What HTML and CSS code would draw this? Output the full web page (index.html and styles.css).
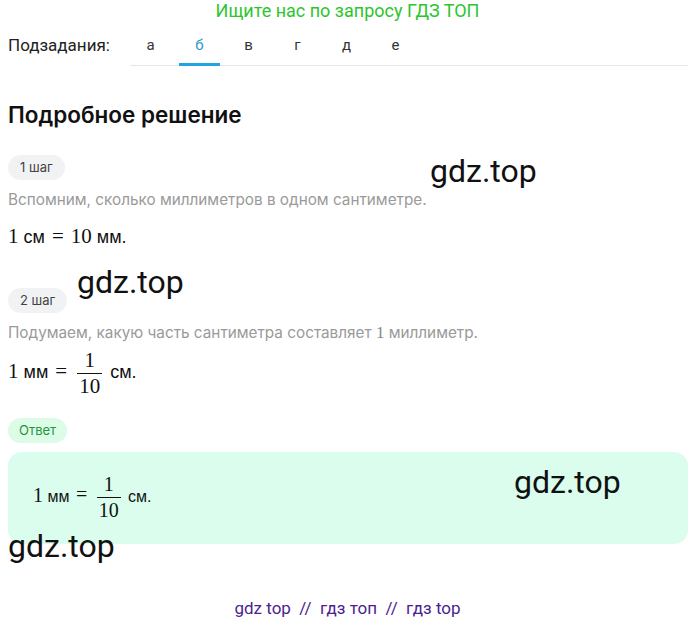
FILE: index.html
```html
<!DOCTYPE html>
<html lang="ru">
  <head>
    <meta charset="UTF-8" />
    <meta name="viewport" content="width=device-width, initial-scale=1.0" />
    <title>Подробное решение</title>
    <link rel="stylesheet" href="styles.css">
  </head>
  <body>
    <div class="banner">Ищите нас по запросу ГДЗ ТОП</div>

    <div class="subtasks">
      <span class="subtasks-label">Подзадания:</span>
      <div class="tabs">
        <span class="tab">а</span>
        <span class="tab active">б</span>
        <span class="tab">в</span>
        <span class="tab">г</span>
        <span class="tab">д</span>
        <span class="tab">е</span>
      </div>
    </div>

    <div class="solution">
      <h2 class="title">Подробное решение</h2>

      <div class="step">
        <span class="badge">1 шаг</span>
        <p class="hint">Вспомним, сколько миллиметров в одном сантиметре.</p>
        <p class="math"><span class="num">1</span> см <span class="num eq">=</span> <span class="num">10</span> мм.</p>
      </div>

      <div class="step">
        <span class="badge">2 шаг</span>
        <p class="hint">Подумаем, какую часть сантиметра составляет <span class="num">1</span> миллиметр.</p>
        <p class="math">
          <span class="num">1</span> мм <span class="num eq">=</span>
          <span class="frac"><span class="num">1</span><span class="num den">10</span></span>
          см.
        </p>
      </div>

      <span class="badge badge-answer">Ответ</span>
      <div class="answer">
        <p class="math math-small">
          <span class="num">1</span> мм <span class="num eq">=</span>
          <span class="frac"><span class="num">1</span><span class="num den">10</span></span>
          см.
        </p>
      </div>
    </div>

    <div class="footer">gdz top &nbsp;//&nbsp; гдз топ &nbsp;//&nbsp; гдз top</div>

    <!-- watermarks lie over the content -->
    <span class="mark mark-1">gdz.top</span>
    <span class="mark mark-2">gdz.top</span>
    <span class="mark mark-3">gdz.top</span>
    <span class="mark mark-4">gdz.top</span>
  </body>
</html>
```

FILE: styles.css
```css
* {
  box-sizing: border-box;
}

body {
  margin: 0;
  position: relative;
  background-color: #fff;
  font-family: Inter, 'Noto Sans', sans-serif;
  color: #111;
}

p {
  margin: 0;
}

.banner {
  height: 26px;
  padding-top: 0;
  text-align: center;
  font-family: Roboto, sans-serif;
  font-size: 18px;
  color: #2dc52d;
}

.subtasks {
  display: flex;
  align-items: stretch;
  height: 40px;
  padding: 0 7px 0 8px;
}

.subtasks-label {
  display: flex;
  align-items: center;
  width: 122px;
  padding-bottom: 2px;
  font-family: Roboto, sans-serif;
  font-size: 17px;
  color: #222;
}

.tabs {
  flex: 1;
  display: flex;
  gap: 8px;
  border-bottom: 1px solid #e6e6e6;
}

.tab {
  width: 41px;
  display: flex;
  align-items: center;
  justify-content: center;
  padding-bottom: 1px;
  font-family: Roboto, sans-serif;
  font-size: 15px;
  color: #333;
}

.tab.active {
  color: #2d96cf;
  border-bottom: 3px solid #1fa5e3;
  margin-bottom: -1px;
  padding-bottom: 0;
}

.solution {
  padding: 0 7px 0 8px;
}

.title {
  margin: 34px 0 0;
  font-size: 22.5px;
  font-weight: 600;
  line-height: 30px;
  color: #111;
}

.step {
  display: flex;
  flex-direction: column;
  align-items: flex-start;
}

.badge {
  display: inline-block;
  margin-top: 25px;
  height: 25px;
  line-height: 25px;
  padding: 0 12px;
  border-radius: 13px;
  background-color: #f1f2f4;
  font-size: 13px;
  color: #444;
}

.step + .step .badge {
  margin-top: 38px;
}

.hint {
  margin-top: 9px;
  font-size: 15.3px;
  line-height: 22px;
  color: #9a9a9a;
}

.math {
  margin-top: 12px;
  font-family: 'Liberation Sans', Arial, sans-serif;
  font-size: 18px;
  line-height: 26px;
  color: #111;
}

.num {
  font-family: 'Liberation Serif', 'Times New Roman', serif;
  font-size: 21px;
}

.hint .num {
  font-size: 17px;
  color: #888;
}

.eq {
  margin: 0 2px;
}

.frac {
  display: inline-flex;
  flex-direction: column;
  align-items: center;
  vertical-align: middle;
  line-height: 21px;
  margin: 0 3px;
}

.frac .num:first-child {
  padding: 0 2px 2px;
  border-bottom: 1px solid #111;
  width: 100%;
  text-align: center;
}

.den {
  padding: 2px 2px 0;
}

.step + .step .math {
  margin-top: 6px;
}

.badge-answer {
  margin-top: 21px;
  padding: 0 11px;
  background-color: #dcfce7;
  color: #23953f;
  font-size: 13px;
}

.answer {
  margin-top: 9px;
  height: 92px;
  display: flex;
  align-items: center;
  padding: 0 25px 2px;
  border-radius: 14px;
  background-color: #dafded;
}

.math-small {
  margin-top: 0;
  font-size: 16px;
}

.math-small .num {
  font-size: 20px;
}

.footer {
  margin-top: 54px;
  text-align: center;
  font-family: Roboto, sans-serif;
  font-size: 17px;
  color: #4b1e90;
}

.mark {
  position: absolute;
  font-family: Roboto, sans-serif;
  font-size: 32px;
  line-height: 1;
  color: #111;
}

.mark-1 {
  left: 430px;
  top: 155px;
}

.mark-2 {
  left: 77px;
  top: 266px;
}

.mark-3 {
  left: 514px;
  top: 466px;
}

.mark-4 {
  left: 8px;
  top: 530px;
}
```
